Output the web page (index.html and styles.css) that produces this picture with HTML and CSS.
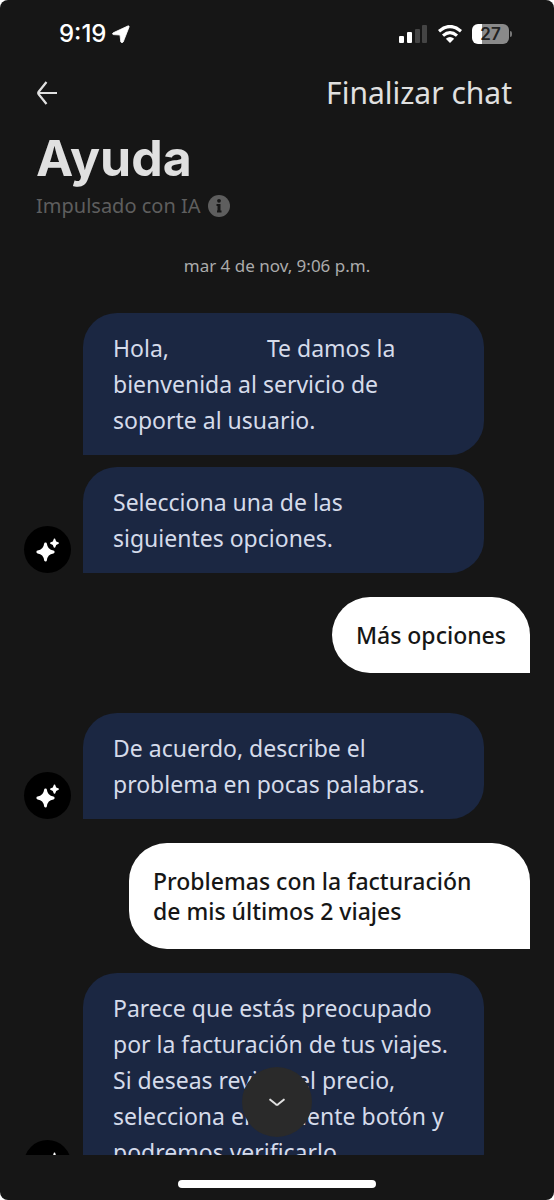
FILE: index.html
```html
<!DOCTYPE html>
<html lang="es">
<head>
<meta charset="utf-8">
<meta name="viewport" content="width=device-width, initial-scale=1">
<title>Ayuda</title>
<link rel="stylesheet" href="styles.css">
</head>
<body>
<svg class="symbols" aria-hidden="true">
  <symbol id="sparkle" viewBox="0 0 24 24">
    <path d="M9.500 6Q10.300 13 17.200 14Q10.300 15 9.500 22Q8.700 15 1.800 14Q8.700 13 9.500 6Z" stroke="currentColor" stroke-width="2.800" stroke-linejoin="round"/>
    <path d="M18.500 1.500Q18.800 4.700 22 5.200Q18.800 5.700 18.500 8.900Q18.200 5.700 15 5.200Q18.200 4.700 18.500 1.500Z" stroke="currentColor" stroke-width="1.800" stroke-linejoin="round"/>
  </symbol>
</svg>
<div class="screen">
  <div class="status">
    <div class="status-left">
      <span class="clock">9:19</span>
      <svg class="location" viewBox="0 0 18 18"><path d="M1.200 7.800L15.800 1Q17.600.4 17 2.200L11.200 17Q10 18.400 8.800 17L8 10L1.200 9.600Q-.3 8.700 1.200 7.800Z" fill="currentColor" stroke="currentColor" stroke-width=".8"/></svg>
    </div>
    <div class="status-right">
      <svg class="signal" viewBox="0 0 29 18"><rect x="0" y="11" width="5" height="7" rx="1" fill="#fff"/><rect x="8" y="7" width="5" height="11" rx="1" fill="#fff"/><rect x="16" y="4" width="5" height="14" rx="1" fill="#444"/><rect x="23" y="0" width="5" height="18" rx="1" fill="#444"/></svg>
      <svg class="wifi" viewBox="0 0 24 18"><g fill="none" stroke="#fff" stroke-width="3.200"><path d="M1 6.200Q12-3.200 23 6.200"/><path d="M5 10.600Q12 4.600 19 10.600"/></g><path d="M7.800 13.700Q12 10.200 16.200 13.700L12 18Z" fill="#fff"/></svg>
      <div class="battery"><span class="battery-level">27</span></div>
    </div>
  </div>
  <header class="header">
    <div class="nav">
      <button class="back" type="button" aria-label="Volver"><svg viewBox="0 0 22 24"><path d="M21 12H2M10.500 1L2.500 11Q1.800 12 2.500 13L10.500 23" fill="none" stroke="currentColor" stroke-width="2.200"/></svg></button>
      <button class="end" type="button">Finalizar chat</button>
    </div>
    <h1 class="title">Ayuda</h1>
    <div class="powered">Impulsado con IA
      <button class="info" type="button" aria-label="Información"><svg viewBox="0 0 22 22"><circle cx="11" cy="11" r="11" fill="currentColor"/><circle cx="11" cy="5.800" r="1.900" fill="#161616"/><path d="M8.500 9h4v6.500H13.500v2H9v-2H9.500v-4.500H8.500Z" fill="#161616"/></svg></button>
    </div>
  </header>
  <main class="chat">
    <time class="date">mar 4 de nov, 9:06 p.m.</time>
    <div class="bot">
      <div class="avatar"><svg><use href="#sparkle"/></svg></div>
      <div class="stack">
        <p class="bubble">Hola, <span class="name"></span> Te damos la<br>bienvenida al servicio de<br>soporte al usuario.</p>
        <p class="bubble">Selecciona una de las<br>siguientes opciones.</p>
      </div>
    </div>
    <p class="mine mine-gap">Más opciones</p>
    <div class="bot">
      <div class="avatar"><svg><use href="#sparkle"/></svg></div>
      <div class="stack"><p class="bubble">De acuerdo, describe el<br>problema en pocas palabras.</p></div>
    </div>
    <p class="mine mine-long">Problemas con la facturación<br>de mis últimos 2 viajes</p>
    <div class="bot">
      <div class="avatar"><svg><use href="#sparkle"/></svg></div>
      <div class="stack"><p class="bubble">Parece que estás preocupado<br>por la facturación de tus viajes.<br>Si deseas revisar el precio,<br>selecciona el siguiente botón y<br>podremos verificarlo.</p></div>
    </div>
  </main>
  <footer class="footer">
    <button class="down" type="button" aria-label="Ir al final"><svg viewBox="0 0 14 8"><path d="M1 1.500L6 5.600Q7 6.300 8 5.600L13 1.500" fill="none" stroke="currentColor" stroke-width="1.800" stroke-linecap="round"/></svg></button>
    <div class="home"></div>
  </footer>
</div>
</body>
</html>
```
FILE: styles.css
```css
* { box-sizing: border-box; }
body { margin: 0; background: #fff; font-family: "Noto Sans", sans-serif; }
button { padding: 0; border: 0; background: none; color: inherit; font: inherit; cursor: pointer; }
svg { display: block; }
p, h1 { margin: 0; }
.symbols { position: absolute; width: 0; height: 0; }
.screen { display: flex; flex-direction: column; height: 100vh; overflow: hidden; border-radius: 8px; background: #161616; color: #e0e0e0; }

.status { display: flex; justify-content: space-between; align-items: center; padding: 20px 45px 0 59px; color: #fff; font-family: Inter, sans-serif; }
.status-left { display: flex; align-items: center; gap: 6px; height: 28px; }
.clock { font-size: 24px; font-weight: 500; line-height: 28px; }
.location { width: 18px; height: 18px; }
.status-right { display: flex; align-items: center; gap: 10px; }
.signal { width: 29px; height: 18px; }
.wifi { width: 24px; height: 18px; }
.battery { position: relative; width: 37px; height: 20px; border-radius: 6px; background: linear-gradient(90deg, #fff 10px, #8a8a8a 10px); }
.battery::after { content: ""; position: absolute; left: 38px; top: 7px; width: 2px; height: 6px; border-radius: 0 2px 2px 0; background: #777; }
.battery-level { display: block; color: #222; font-size: 17px; font-weight: 600; line-height: 20px; text-align: center; }

.header { padding: 25px 42px 0 36px; }
.nav { display: flex; justify-content: space-between; align-items: center; height: 40px; }
.back svg { width: 22px; height: 24px; }
.end { font-size: 30px; line-height: 40px; }
.title { font-family: Inter, sans-serif; font-size: 50px; font-weight: 700; line-height: 64px; margin-top: 13px; }
.powered { display: flex; align-items: center; gap: 7px; margin-top: 2px; color: #5e5e5e; font-size: 20px; line-height: 28px; }
.info svg { width: 22px; height: 22px; }

.chat { flex: 1; min-height: 0; overflow: hidden; display: flex; flex-direction: column; padding: 34px 24px 0; }
.chat > * { flex: none; }
.date { color: #ababab; font-size: 17px; line-height: 24px; text-align: center; margin-bottom: 35px; }
.bot { display: flex; align-items: flex-end; gap: 12px; padding-right: 46px; }
.avatar { display: grid; place-items: center; width: 47px; height: 47px; border-radius: 50%; background: #000; color: #fff; }
.avatar svg { width: 24px; height: 24px; fill: currentColor; }
.stack { flex: 1; display: flex; flex-direction: column; gap: 12px; }
.bubble { padding: 17px 10px 17px 30px; border-radius: 34px 34px 34px 0; background: #1b2742; color: #d5dbea; font-size: 23px; line-height: 36px; white-space: nowrap; }
.name { display: inline-block; width: 86px; }
.mine { align-self: flex-end; margin: 24px 0; padding: 23px 24px; border-radius: 38px 38px 0 38px; background: #fff; color: #161616; font-size: 23px; font-weight: 500; line-height: 30px; white-space: nowrap; }
.mine-gap { margin-bottom: 40px; }
.mine-long { align-self: stretch; margin-left: 105px; }

.footer { position: relative; height: 45px; padding-top: 25px; }
.home { width: 198px; height: 8px; margin: 0 auto; border-radius: 4px; background: #fff; }
.down { position: absolute; left: 50%; bottom: 63px; display: grid; place-items: center; width: 70px; height: 70px; margin-left: -35px; border-radius: 50%; background: #2a2a2a; }
.down svg { width: 16px; height: 9px; }
```
